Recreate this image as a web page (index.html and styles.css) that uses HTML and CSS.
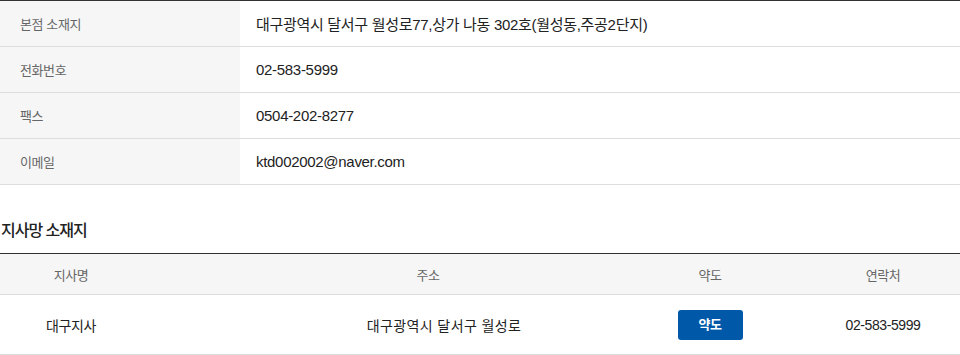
FILE: index.html
```html
<!DOCTYPE html>
<html lang="ko">
  <head>
    <meta charset="utf-8">
    <meta name="viewport" content="width=device-width,initial-scale=1.0">
    <title>찾아오시는 길</title>
    <link rel="stylesheet" href="styles.css">
  </head>
  <body>
    <!-- 본점 정보 -->
    <table class="info">
      <tr>
        <th>본점 소재지</th>
        <td>대구광역시 달서구 월성로77,상가 나동 302호(월성동,주공2단지)</td>
      </tr>
      <tr>
        <th>전화번호</th>
        <td>02-583-5999</td>
      </tr>
      <tr>
        <th>팩스</th>
        <td>0504-202-8277</td>
      </tr>
      <tr>
        <th>이메일</th>
        <td>ktd002002@naver.com</td>
      </tr>
    </table>

    <!-- 지사망 -->
    <h3 class="sub-title">지사망 소재지</h3>
    <table class="branch">
      <colgroup>
        <col class="col-name">
        <col class="col-addr">
        <col class="col-map">
        <col class="col-tel">
      </colgroup>
      <thead>
        <tr>
          <th>지사명</th>
          <th class="addr">주소</th>
          <th>약도</th>
          <th>연락처</th>
        </tr>
      </thead>
      <tbody>
        <tr>
          <td>대구지사</td>
          <td class="addr">대구광역시 달서구 월성로</td>
          <td><a href="#" class="btn-map">약도</a></td>
          <td>02-583-5999</td>
        </tr>
      </tbody>
    </table>
  </body>
</html>
```

FILE: styles.css
```css
/* 기본 */

body {
  margin: 0;
  background-color: #fff;
  color: #222;
  font-family: "Liberation Sans", "Noto Sans CJK KR", sans-serif;
  letter-spacing: -0.4px;
}
table {
  width: 100%;
  border-collapse: collapse;
}
th, td {
  padding: 0;
  font-weight: normal;
}

/* 본점 정보 */

.info {
  border-top: 1px solid #333;
}
.info th, .info td {
  height: 45px;
  border-bottom: 1px solid #ddd;
  text-align: left;
}
.info th {
  width: 240px;
  padding-left: 20px;
  box-sizing: border-box;
  background-color: #f6f6f6;
  color: #666;
  font-size: 13px;
}
.info td {
  padding-left: 16px;
  font-size: 15px;
  letter-spacing: -0.3px;
}

/* 지사망 */

.sub-title {
  margin: 35px 0 11px 0;
  padding-left: 1px;
  font-size: 16px;
  font-weight: 500;
  line-height: 22px;
  letter-spacing: -1px;
  color: #222;
}
.branch {
  border-top: 1px solid #333;
  text-align: center;
}
.col-name { width: 142px; }
.col-map { width: 192px; }
.col-tel { width: 154px; }
.branch th {
  height: 40px;
  background-color: #f6f6f6;
  border-bottom: 1px solid #ddd;
  color: #666;
  font-size: 13px;
}
.branch td {
  height: 59px;
  border-bottom: 1px solid #ddd;
  font-size: 14px;
}
.branch th.addr {
  padding-left: 100px;
}
.branch td.addr {
  padding-left: 132px;
  letter-spacing: 0.4px;
}
.btn-map {
  display: inline-block;
  width: 65px;
  height: 30px;
  line-height: 30px;
  border-radius: 3px;
  background-color: #0058a8;
  color: #fff;
  font-size: 13px;
  font-weight: bold;
  text-decoration: none;
  vertical-align: middle;
}
```
